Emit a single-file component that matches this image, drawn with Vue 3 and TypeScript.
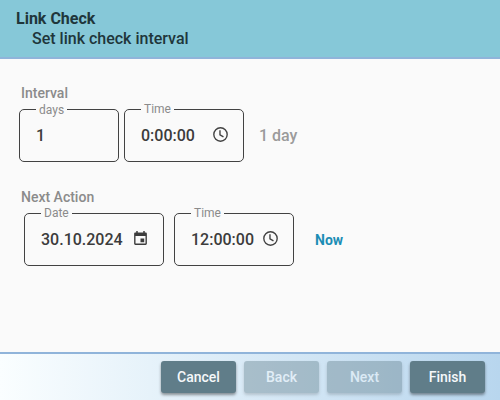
<script setup lang="ts">
import { ref } from 'vue'

type Icon = 'clock' | 'calendar' | null
interface Field { label: string; value: string; icon: Icon; size: string }
interface Action { label: string; disabled: boolean }

const interval = ref<Field[]>([
  { label: 'days', value: '1', icon: null, size: 'small' },
  { label: 'Time', value: '0:00:00', icon: 'clock', size: 'medium' },
])
const nextAction = ref<Field[]>([
  { label: 'Date', value: '30.10.2024', icon: 'calendar', size: 'large' },
  { label: 'Time', value: '12:00:00', icon: 'clock', size: 'medium' },
])
const actions: Action[] = [
  { label: 'Cancel', disabled: false },
  { label: 'Back', disabled: true },
  { label: 'Next', disabled: true },
  { label: 'Finish', disabled: false },
]
</script>

<template>
  <div class="dialog">
    <header class="header">
      <h1 class="title">Link Check</h1>
      <div class="subtitle">Set link check interval</div>
    </header>

    <main class="content">
      <section class="group">
        <h2 class="caption">Interval</h2>
        <div class="row">
          <div v-for="f in interval" :key="f.label" class="field" :class="f.size">
            <span class="label">{{ f.label }}</span>
            <span class="value">{{ f.value }}</span>
            <svg v-if="f.icon === 'clock'" class="icon" viewBox="0 0 16 16">
              <circle cx="8" cy="8" r="6.3" />
              <path d="M7.500 4v4.300l3.300 2" />
            </svg>
          </div>
          <span class="summary">1 day</span>
        </div>
      </section>

      <section class="group next">
        <h2 class="caption">Next Action</h2>
        <div class="row">
          <div v-for="f in nextAction" :key="f.label" class="field" :class="f.size">
            <span class="label">{{ f.label }}</span>
            <span class="value">{{ f.value }}</span>
            <svg v-if="f.icon === 'clock'" class="icon" viewBox="0 0 16 16">
              <circle cx="8" cy="8" r="6.3" />
              <path d="M7.500 4v4.300l3.300 2" />
            </svg>
            <svg v-if="f.icon === 'calendar'" class="icon solid" viewBox="0 0 16 16">
              <path fill-rule="evenodd" d="M4 1h1.400v1.300h5.200V1H12v1.300h.8c.7 0 1.200.5 1.200 1.200v9.300c0 .7-.5 1.200-1.200 1.200H3.200C2.500 14 2 13.500 2 12.800V3.500c0-.7.5-1.200 1.200-1.200H4zM3.300 5.700v7h9.400v-7zM8 8h3.500v3.500H8z" />
            </svg>
          </div>
          <button class="now" type="button">Now</button>
        </div>
      </section>
    </main>

    <footer class="footer">
      <button v-for="a in actions" :key="a.label" class="action" type="button" :disabled="a.disabled">
        {{ a.label }}
      </button>
    </footer>
  </div>
</template>

<style>
body { margin: 0; }
</style>

<style scoped>
.dialog {
  box-sizing: border-box;
  display: flex;
  flex-direction: column;
  width: 500px;
  height: 400px;
  overflow: hidden;
  background: #fafafa;
  font-family: Roboto, sans-serif;
  font-weight: 500;
}
.header {
  box-sizing: border-box;
  height: 59px;
  padding: 9px 16px 0;
  border-bottom: 2px solid #90b4da;
  background: #86c8d8;
  color: #20363b;
}
.title { margin: 0; font-size: 16px; line-height: 20px; font-weight: 700; }
.subtitle { padding-left: 16px; font-size: 16px; line-height: 20px; }
.content { flex: 1; padding: 25px 19px 0; }
.group { height: 104px; }
.caption {
  margin: 0;
  padding-left: 2px;
  height: 25px;
  font-size: 14px;
  line-height: 18px;
  font-weight: 500;
  color: #8b8b8b;
}
.row { display: flex; align-items: center; gap: 5px; }
.next .row { gap: 10px; padding-left: 5px; }
.field {
  position: relative;
  box-sizing: border-box;
  display: flex;
  align-items: center;
  justify-content: space-between;
  height: 53px;
  padding: 0 15px 0 16px;
  border: 1px solid #424242;
  border-radius: 5px;
}
.small { width: 100px; }
.medium { width: 120px; }
.large { width: 140px; }
.label {
  position: absolute;
  left: 16px;
  top: -8px;
  padding: 0 3px;
  background: #fafafa;
  color: #8b8b8b;
  font-size: 12px;
  line-height: 14px;
  font-weight: 400;
}
.small .label { top: -7px; }
.value { color: #3c3c3c; font-size: 16px; line-height: 20px; }
.icon {
  width: 17px;
  height: 17px;
  margin: 0 -1px 2px 0;
  fill: none;
  stroke: #424242;
  stroke-width: 1.3;
}
.solid { fill: #3c3c3c; stroke: none; }
.summary { margin-left: 10px; color: #9b9b9b; font-size: 16px; }
button { border: 0; font-family: inherit; font-weight: 500; font-size: 14px; }
.now { margin-left: 11px; padding: 0; background: none; color: #1c8db5; font-weight: 700; }
.footer {
  box-sizing: border-box;
  display: flex;
  justify-content: flex-end;
  gap: 8px;
  height: 48px;
  padding: 7px 15px 0 0;
  border-top: 2px solid #90b4da;
  background: linear-gradient(to right, #fafeff, #e6f2fa 30%, #b8d6ee);
}
.action {
  width: 75px;
  height: 32px;
  padding: 0;
  border-radius: 3px;
  background: #607d89;
  color: #f5f8fa;
  box-shadow: 0 2px 3px rgba(0, 0, 0, 0.4);
}
.action:disabled { opacity: 0.4; }
</style>
